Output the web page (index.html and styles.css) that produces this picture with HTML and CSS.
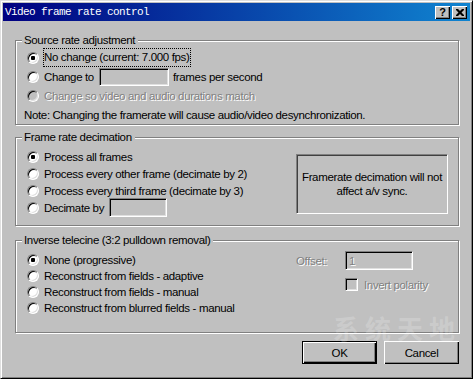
FILE: index.html
```html
<!DOCTYPE html>
<html>
<head>
<meta charset="utf-8">
<link rel="stylesheet" href="styles.css">
</head>
<body>
<div class="window">
  <div class="titlebar">
    <span class="title">Video frame rate control</span>
    <div class="caption-btns">
      <span class="cbtn help">?</span>
      <span class="cbtn close"><svg width="8" height="7" viewBox="0 0 8 7"><path d="M0 0h2l2 2 2-2h2v1l-2.5 2.5L8 6v1H6L4 5 2 7H0V6l2.5-2.5L0 1z" fill="#000"/></svg></span>
    </div>
  </div>
  <div class="content">
    <section class="group g1">
      <div class="legend">Source rate adjustment</div>
      <div class="row r19"><span class="radio on"></span><span class="focus">No change (current: 7.000 fps)</span></div>
      <div class="row r19"><span class="radio"></span><span class="lbl-change">Change to</span><span class="field f-change"></span><span class="fps">frames per second</span></div>
      <div class="row r19"><span class="radio dis"></span><span class="etched">Change so video and audio durations match</span></div>
      <div class="row r19 note">Note: Changing the framerate will cause audio/video desynchronization.</div>
    </section>

    <section class="group g2">
      <div class="legend">Frame rate decimation</div>
      <div class="g2-body">
        <div class="col">
          <div class="row r17"><span class="radio on"></span><span>Process all frames</span></div>
          <div class="row r17"><span class="radio"></span><span>Process every other frame (decimate by 2)</span></div>
          <div class="row r17"><span class="radio"></span><span>Process every third frame (decimate by 3)</span></div>
          <div class="row r17"><span class="radio"></span><span class="lbl-dec">Decimate by</span><span class="field f-dec"></span></div>
        </div>
        <div class="info">Framerate decimation will not<br>affect a/v sync.</div>
      </div>
    </section>

    <section class="group g3">
      <div class="legend">Inverse telecine (3:2 pulldown removal)</div>
      <div class="g3-body">
        <div class="col">
          <div class="row r16"><span class="radio on"></span><span>None (progressive)</span></div>
          <div class="row r16"><span class="radio"></span><span>Reconstruct from fields - adaptive</span></div>
          <div class="row r16"><span class="radio"></span><span>Reconstruct from fields - manual</span></div>
          <div class="row r16"><span class="radio"></span><span>Reconstruct from blurred fields - manual</span></div>
        </div>
        <div class="tele-opts">
          <div class="offset-row"><span class="etched lbl-off">Offset:</span><span class="field f-off"><span class="etched">1</span></span></div>
          <div class="invert-row"><span class="check"></span><span class="etched">Invert polarity</span></div>
        </div>
      </div>
    </section>

    <div class="buttons">
      <span class="btn default">OK</span>
      <span class="btn">Cancel</span>
    </div>
  </div>
  <div class="watermark">系统天地</div>
</div>
</body>
</html>
```

FILE: styles.css
```css
body {
  margin: 0;
  background: #c0c0c0;
  font-family: "Liberation Sans", Arial, sans-serif;
  font-size: 11.5px;
  letter-spacing: -0.35px;
  color: #000;
}
.window {
  width: 473px;
  height: 379px;
  box-sizing: border-box;
  border: 1px solid;
  border-color: #dfdfdf #000 #000 #dfdfdf;
  box-shadow: inset 1px 1px #fff, inset -1px -1px #808080;
  padding: 2px;
  display: flex;
  flex-direction: column;
  position: relative;
  overflow: hidden;
}
.titlebar {
  height: 18px;
  flex: none;
  display: flex;
  align-items: center;
  justify-content: space-between;
  background: linear-gradient(to right, #000080, #1084d0);
  padding: 0 3px 0 2px;
}
.title {
  font-family: "Liberation Mono", monospace;
  font-size: 11px;
  letter-spacing: -0.6px;
  color: #fff;
}
.caption-btns {
  display: flex;
  gap: 2px;
}
.cbtn {
  width: 15px;
  height: 13px;
  box-sizing: border-box;
  background: #c0c0c0;
  box-shadow: inset 1px 1px #fff, inset -1px -1px #000, inset -2px -2px #808080;
  display: flex;
  align-items: center;
  justify-content: center;
}
.help {
  font: bold 11px "Liberation Sans", sans-serif;
  letter-spacing: 0;
  line-height: 13px;
}
.content {
  flex: 1;
  display: flex;
  flex-direction: column;
  padding: 0 11px 0 12px;
}
.group {
  box-sizing: border-box;
  border: 1px solid #808080;
  box-shadow: inset 1px 1px #fff, 1px 1px #fff;
  flex: none;
}
.g1 { margin-top: 19px; height: 85px; }
.g2 { margin-top: 12px; height: 89px; }
.g3 { margin-top: 14px; height: 93px; }
.legend {
  width: fit-content;
  margin: -8px 0 0 6px;
  padding: 0 3px 0 2px;
  background: #c0c0c0;
  height: 15px;
  line-height: 15px;
  white-space: nowrap;
}
.row {
  display: flex;
  align-items: center;
  padding-left: 11px;
  white-space: nowrap;
}
.r19 { height: 19px; }
.r17 { height: 17px; }
.r16 { height: 16px; }
.row.note { padding-left: 8px; }
.radio {
  flex: none;
  width: 12px;
  height: 12px;
  box-sizing: border-box;
  border-radius: 50%;
  border: 1px solid;
  border-color: #808080 #fff #fff #808080;
  box-shadow: inset 1px 1px #000, inset -1px -1px #dfdfdf;
  background: #fff;
  margin-right: 5px;
  display: flex;
  align-items: center;
  justify-content: center;
}
.radio.on::after {
  content: "";
  width: 4px;
  height: 4px;
  border-radius: 1px;
  background: #000;
}
.radio.dis { background: #c0c0c0; }
.focus {
  outline: 1px dotted #000;
  outline-offset: 0;
  padding: 1px 1px 1px 0;
  line-height: 15px;
}
.etched {
  color: #808080;
  text-shadow: 1px 1px 0 #fff;
}
.field {
  flex: none;
  box-sizing: border-box;
  background: #c0c0c0;
  border: 1px solid;
  border-color: #808080 #fff #fff #808080;
  box-shadow: inset 1px 1px #000, inset -1px -1px #dfdfdf;
  display: flex;
  align-items: center;
  padding-left: 3px;
}
.lbl-change { width: 55px; }
.f-change { width: 70px; height: 18px; }
.fps { margin-left: 4px; }
.g2-body { display: flex; margin-top: 3px; }
.col { flex: 1; display: flex; flex-direction: column; }
.lbl-dec { width: 65px; }
.f-dec { width: 58px; height: 19px; }
.info {
  flex: none;
  box-sizing: border-box;
  width: 152px;
  height: 60px;
  margin: 6px 10px 0 0;
  border: 1px solid;
  border-color: #808080 #fff #fff #808080;
  box-shadow: inset 1px 1px #404040;
  display: flex;
  align-items: center;
  justify-content: center;
  text-align: center;
  line-height: 14px;
  white-space: nowrap;
}
.g3-body { display: flex; margin-top: 4px; }
.tele-opts {
  flex: none;
  width: 117px;
  margin: -1px 45px 0 0;
  display: flex;
  flex-direction: column;
}
.offset-row { display: flex; align-items: center; height: 19px; }
.lbl-off { width: 49px; }
.f-off { width: 68px; height: 19px; }
.invert-row {
  display: flex;
  align-items: center;
  margin-top: 8px;
  padding-left: 49px;
  white-space: nowrap;
}
.check {
  flex: none;
  width: 13px;
  height: 13px;
  box-sizing: border-box;
  border: 1px solid;
  border-color: #808080 #fff #fff #808080;
  box-shadow: inset 1px 1px #000, inset -1px -1px #dfdfdf;
  background: #c0c0c0;
  margin-right: 6px;
}
.buttons {
  display: flex;
  justify-content: flex-end;
  gap: 7px;
  margin-top: 8px;
}
.btn {
  box-sizing: border-box;
  width: 75px;
  height: 23px;
  background: #c0c0c0;
  box-shadow: inset 1px 1px #fff, inset -1px -1px #000, inset -2px -2px #808080;
  display: flex;
  align-items: center;
  justify-content: center;
}
.btn.default {
  border: 1px solid #000;
}
.watermark {
  position: absolute;
  left: 332px;
  top: 308px;
  font-family: "Noto Sans CJK SC", sans-serif;
  font-size: 26px;
  font-weight: bold;
  letter-spacing: 6px;
  color: rgba(255, 255, 255, 0.2);
  pointer-events: none;
}
```
